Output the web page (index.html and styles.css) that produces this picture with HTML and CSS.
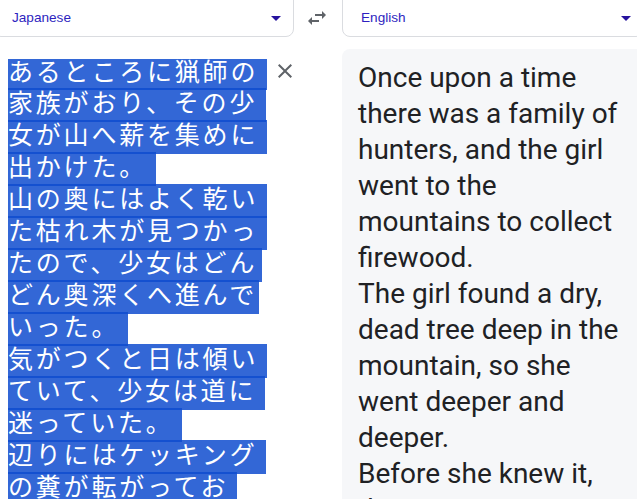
FILE: index.html
```html
<!DOCTYPE html>
<html lang="ja">
<head>
<meta charset="utf-8">
<title>Translate</title>
<link rel="stylesheet" href="styles.css">
</head>
<body>
<div class="page">
  <div class="topbar">
    <div class="select select-left">
      <span class="label">Japanese</span>
      <svg class="caret" width="10" height="5" viewBox="0 0 10 5"><path d="M0 0h10L5 5z"/></svg>
    </div>
    <div class="swap">
      <svg width="24" height="24" viewBox="0 0 24 24"><path d="M6.99 11L3 15l3.99 4v-3H14v-2H6.99v-3zM21 9l-4-4v3h-7v2h7v3l4-4z"/></svg>
    </div>
    <div class="select select-right">
      <span class="label">English</span>
      <svg class="caret" width="10" height="5" viewBox="0 0 10 5"><path d="M0 0h10L5 5z"/></svg>
    </div>
  </div>
  <div class="main">
    <div class="source">
      <div class="lines">
        <div class="line">あるところに猟師の</div>
        <div class="line">家族がおり、その少</div>
        <div class="line">女が山へ薪を集めに</div>
        <div class="line">出かけた。</div>
        <div class="line">山の奥にはよく乾い</div>
        <div class="line">た枯れ木が見つかっ</div>
        <div class="line line-tight">たので、少女はどん</div>
        <div class="line line-tighter">どん奥深くへ進んで</div>
        <div class="line">いった。</div>
        <div class="line">気がつくと日は傾い</div>
        <div class="line">ていて、少女は道に</div>
        <div class="line">迷っていた。</div>
        <div class="line">辺りにはケッキング</div>
        <div class="line">の糞が転がってお</div>
      </div>
      <svg class="clear" width="24" height="24" viewBox="0 0 24 24"><path d="M19 6.41L17.59 5 12 10.59 6.41 5 5 6.41 10.59 12 5 17.59 6.41 19 12 13.41 17.59 19 19 17.59 13.41 12z"/></svg>
    </div>
    <div class="target">
      <div class="target-text">
        <p>Once upon a time there was a family of hunters, and the girl went to the mountains to collect firewood.</p>
        <p>The girl found a dry, dead tree deep in the mountain, so she went deeper and deeper.</p>
        <p>Before she knew it, the sun was setting and the girl was lost.</p>
      </div>
    </div>
  </div>
</div>
</body>
</html>
```

FILE: styles.css
```css
html, body {
  margin: 0;
  padding: 0;
  background: #ffffff;
}

body {
  width: 637px;
  height: 499px;
  overflow: hidden;
}

.page {
  height: 499px;
  display: flex;
  flex-direction: column;
}

.topbar {
  display: flex;
  height: 37px;
  flex: 0 0 37px;
}

.select {
  box-sizing: border-box;
  height: 47px;
  margin-top: -10px;
  border: 1px solid #dadce0;
  border-radius: 8px;
  display: flex;
  align-items: flex-end;
  padding: 0 12px 10px 18px;
  font-family: "Liberation Sans", Arial, sans-serif;
  font-size: 13.6px;
  line-height: 16px;
  color: #2e1fc0;
  flex-shrink: 0;
}

.select-left {
  width: 301px;
  margin-left: -7px;
}

.select-right {
  width: 302px;
}

.select .label {
  flex: 1;
}

.caret {
  fill: #26129e;
  margin-bottom: 5px;
  display: block;
}

.swap {
  width: 48px;
  flex: 0 0 48px;
  display: flex;
  padding: 6px 0 0 11px;
  box-sizing: border-box;
}

.swap svg {
  fill: #5f6368;
  display: block;
}

.main {
  flex: 1;
  display: flex;
  min-height: 0;
}

.source {
  width: 342px;
  flex: 0 0 342px;
  display: flex;
  align-items: flex-start;
  padding: 22px 0 0 8px;
  box-sizing: border-box;
}

.lines {
  width: 265px;
  font-family: "Noto Sans CJK JP", sans-serif;
  font-size: 25px;
  letter-spacing: 2.8px;
  color: #ffffff;
}

.line {
  width: fit-content;
  height: 34px;
  line-height: 26px;
  margin-top: -2px;
  padding-right: 8.5px;
  background: rgba(15, 76, 207, 0.85);
  white-space: nowrap;
}

.line:first-child {
  height: 31px;
  line-height: 23px;
  margin-top: 0;
}

.line-tight {
  padding-right: 5px;
}

.line-tighter {
  padding-right: 2px;
}

.clear {
  fill: #5f6368;
  display: block;
  flex-shrink: 0;
  margin-top: 0;
}

.target {
  flex: 1;
  margin-top: 12px;
  background: #f6f7f9;
  border-top-left-radius: 8px;
  padding: 11px 16px;
}

.target-text {
  width: 266px;
  font-family: Roboto, "Liberation Sans", sans-serif;
  font-size: 28px;
  line-height: 36px;
  color: #202124;
}

.target-text p {
  margin: 0;
}
```
